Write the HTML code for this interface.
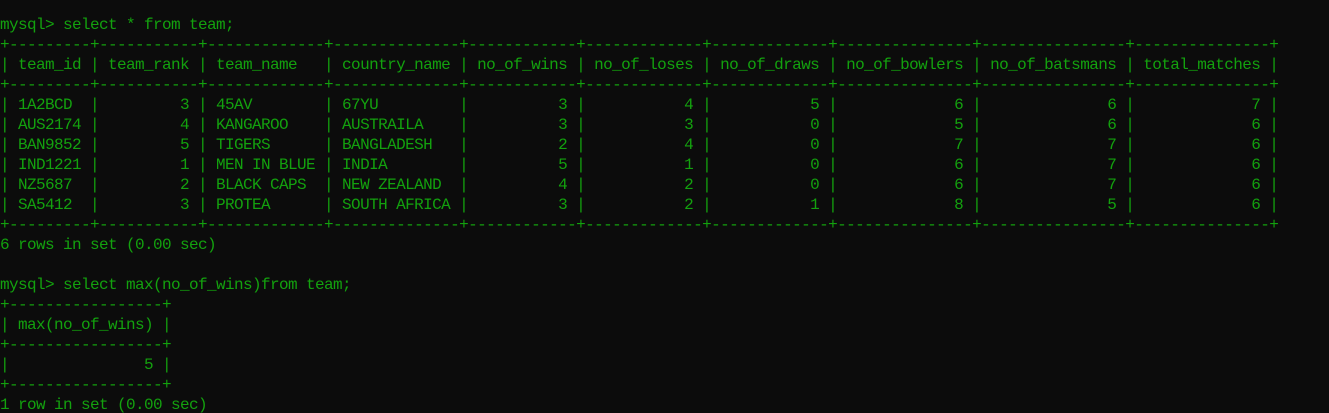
<!DOCTYPE html>
<html><head><style>
html,body{margin:0;padding:0;background:#0c0c0c;width:1329px;height:413px;overflow:hidden}
pre{margin:0;padding:15px 0 0 0;font-family:"Liberation Mono",monospace;font-size:16px;letter-spacing:-0.6px;line-height:20px;color:#13a10e;white-space:pre}
</style></head><body><pre>mysql&gt; select * from team;
+---------+-----------+-------------+--------------+------------+-------------+-------------+---------------+----------------+---------------+
| team_id | team_rank | team_name   | country_name | no_of_wins | no_of_loses | no_of_draws | no_of_bowlers | no_of_batsmans | total_matches |
+---------+-----------+-------------+--------------+------------+-------------+-------------+---------------+----------------+---------------+
| 1A2BCD  |         3 | 45AV        | 67YU         |          3 |           4 |           5 |             6 |              6 |             7 |
| AUS2174 |         4 | KANGAROO    | AUSTRAILA    |          3 |           3 |           0 |             5 |              6 |             6 |
| BAN9852 |         5 | TIGERS      | BANGLADESH   |          2 |           4 |           0 |             7 |              7 |             6 |
| IND1221 |         1 | MEN IN BLUE | INDIA        |          5 |           1 |           0 |             6 |              7 |             6 |
| NZ5687  |         2 | BLACK CAPS  | NEW ZEALAND  |          4 |           2 |           0 |             6 |              7 |             6 |
| SA5412  |         3 | PROTEA      | SOUTH AFRICA |          3 |           2 |           1 |             8 |              5 |             6 |
+---------+-----------+-------------+--------------+------------+-------------+-------------+---------------+----------------+---------------+
6 rows in set (0.00 sec)

mysql&gt; select max(no_of_wins)from team;
+-----------------+
| max(no_of_wins) |
+-----------------+
|               5 |
+-----------------+
1 row in set (0.00 sec)</pre></body></html>
